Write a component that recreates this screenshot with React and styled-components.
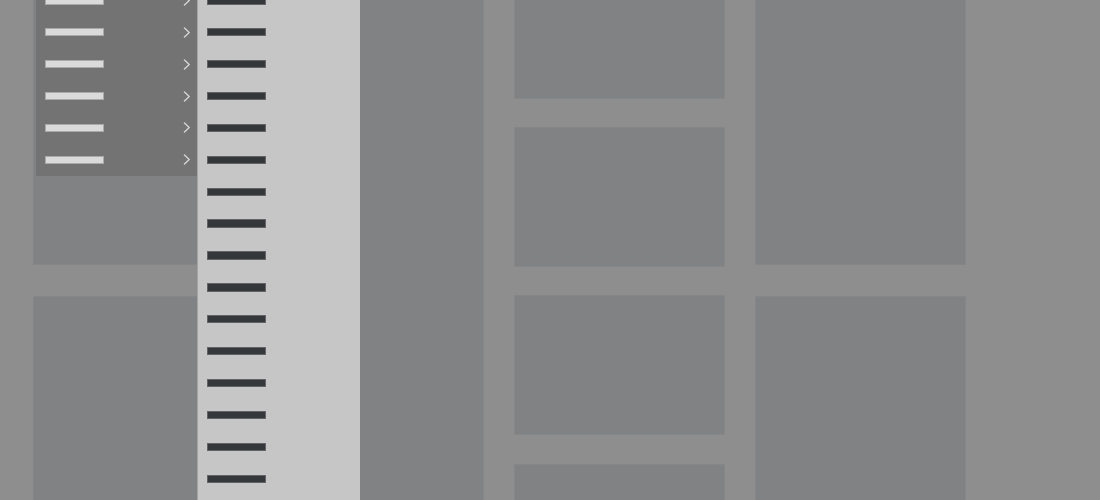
import React from "react";
import styled, { createGlobalStyle } from "styled-components";

const Global = createGlobalStyle`
  html, body { margin: 0; padding: 0; background: #8e8e8e; overflow: hidden; height: 100%; }
  body { font-family: "Liberation Sans", Arial, sans-serif; }
  #root { position: relative; height: 100%; overflow: hidden; }
`;

const Page = styled.div`
  position: relative;
  height: 500px;
  overflow: hidden;
  background: #8e8e8e;
`;

const Board = styled.div`
  display: grid;
  grid-template-columns: repeat(4, 210.5px);
  column-gap: 30.2px;
  padding-left: 33px;
  margin-top: -41px;
  align-items: start;
`;

const Column = styled.div`
  display: flex;
  flex-direction: column;
  gap: ${(p) => p.$gap}px;
`;

const Card = styled.div`
  height: ${(p) => p.$h}px;
  background: #818284;
  box-shadow: inset 0 0 0 1px #858688;
`;

const Overlay = styled.div`
  position: absolute;
  top: -15.6px;
  left: 36px;
  display: flex;
  align-items: flex-start;
`;

const Menu = styled.div`
  width: 161px;
  background: #737373;
  display: flex;
  flex-direction: column;
`;

const Submenu = styled.div`
  width: 162px;
  min-height: 530px;
  background: #c6c6c6;
  border-left: 1px solid #a4a4a4;
  display: flex;
  flex-direction: column;
`;

const Row = styled.div`
  height: 31.9px;
  display: flex;
  align-items: center;
  justify-content: space-between;
  padding: 0 6px 0 9px;
  box-sizing: border-box;
  flex-shrink: 0;
`;

const Label = styled.span`
  display: block;
  width: 59px;
  height: 8.3px;
  box-sizing: border-box;
  background: ${(p) => (p.$dark ? "#36373b" : "#dadada")};
  border: 1px solid ${(p) => (p.$dark ? "#626367" : "#a9a9a9")};
`;

const Chevron = () => (
  <svg width="8" height="11" viewBox="0 0 8 11" fill="none">
    <polyline points="1.5,1 6.2,5.5 1.5,10" stroke="#d2d2d2" strokeWidth="1.5" strokeLinecap="round" strokeLinejoin="round" />
  </svg>
);

const menuItems = Array.from({ length: 6 });
const subItems = Array.from({ length: 16 });

export default function App() {
  return (
    <Page>
      <Global />
      <Board>
        <Column $gap={31}>
          <Card $h={306} />
          <Card $h={300} />
        </Column>
        <Column $gap={30}>
          <Card $h={600} />
        </Column>
        <Column $gap={28.7}>
          <Card $h={139.5} />
          <Card $h={139.5} />
          <Card $h={139.5} />
          <Card $h={139.5} />
        </Column>
        <Column $gap={31}>
          <Card $h={306} />
          <Card $h={300} />
        </Column>
      </Board>
      <Overlay>
        <Menu>
          {menuItems.map((_, i) => (
            <Row key={i}>
              <Label />
              <Chevron />
            </Row>
          ))}
        </Menu>
        <Submenu>
          {subItems.map((_, i) => (
            <Row key={i}>
              <Label $dark />
            </Row>
          ))}
        </Submenu>
      </Overlay>
    </Page>
  );
}
